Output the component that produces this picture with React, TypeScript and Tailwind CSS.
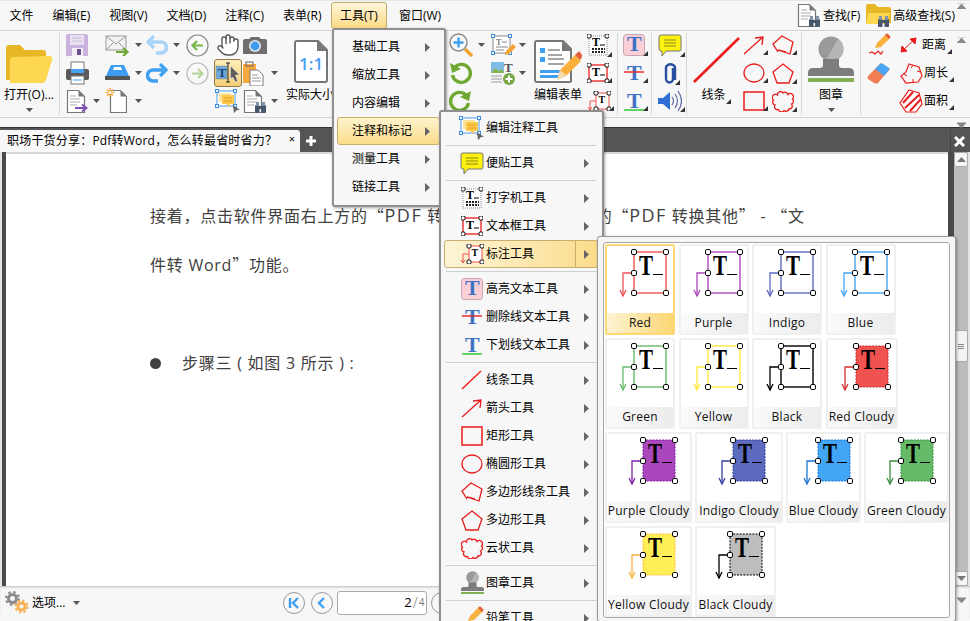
import type { ReactNode } from "react";
import { Hand } from "lucide-react";

const S = ({ w, h, children }: { w: number; h: number; children: ReactNode }) => (
  <svg width={w} height={h} viewBox={`0 0 ${w} ${h}`} className="block shrink-0" fill="none">
    {children}
  </svg>
);

const Caret = () => (
  <svg width="7" height="4" viewBox="0 0 7 4" className="block shrink-0">
    <path d="M0 0h7L3.5 4z" fill="#555" />
  </svg>
);

const Corner = () => (
  <svg width="5" height="5" viewBox="0 0 5 5" className="absolute bottom-0 right-0">
    <path d="M5 0v5H0z" fill="#333" />
  </svg>
);

const SubArrow = () => (
  <svg width="5" height="9" viewBox="0 0 5 9" className="block shrink-0">
    <path d="M0 0l5 4.5L0 9z" fill="#666" />
  </svg>
);

const Handle = ({ x, y }: { x: number; y: number }) => (
  <rect x={x - 2} y={y - 2} width="4" height="4" rx="1.2" fill="#fff" stroke="#000" />
);

const BigHandle = ({ x, y }: { x: number; y: number }) => (
  <rect x={x - 2.5} y={y - 2.5} width="5" height="5" rx="1.4" fill="#fff" stroke="#000" />
);

/* ---- document-ish icons ---- */
const DocBase = () => (
  <>
    <path d="M1.5 1.5h11l6 6v16h-17z" fill="#fff" stroke="#777" strokeWidth="1.2" />
    <path d="M12.5 1.5l6 6h-6z" fill="#777" />
    <path d="M4 7h6M4 10h10M4 13h10M4 16h7" stroke="#aaa" />
  </>
);
const DocArrow = () => (
  <S w={22} h={25}>
    <DocBase />
    <path d="M9 19h11M16 15.5l4.5 3.5-4.5 3.5" stroke="#7a52b3" strokeWidth="2" />
  </S>
);
const DocNew = () => (
  <S w={22} h={26}>
    <path d="M5.5 2.5h10l6 6v16h-16z" fill="#fff" stroke="#777" strokeWidth="1.2" />
    <path d="M15.5 2.5l6 6h-6z" fill="#777" />
    <path d="M5 0v9M0.5 4.5h9M2 1.5l6 6M8 1.5l-6 6" stroke="#f4a024" strokeWidth="1.2" />
    <circle cx="5" cy="4.5" r="1.6" fill="#fff" />
  </S>
);
const Bino = ({ x, y }: { x: number; y: number }) => (
  <g transform={`translate(${x} ${y})`}>
    <rect x="0" y="3" width="4.5" height="8" rx="1" fill="#46566b" />
    <rect x="6.5" y="3" width="4.5" height="8" rx="1" fill="#46566b" />
    <rect x="1" y="0" width="3" height="4" fill="#8094aa" />
    <rect x="7" y="0" width="3" height="4" fill="#8094aa" />
    <rect x="4" y="4" width="3" height="3" fill="#46566b" />
  </g>
);
const DocBino = () => (
  <S w={25} h={25}>
    <DocBase />
    <Bino x={12} y={13} />
  </S>
);

/* ---- ribbon, first half ---- */
const Folder = () => (
  <S w={47} h={38}>
    <path d="M0 3q0-3 3-3h11l5 5h18q3 0 3 3v27H0z" fill="#e8b726" />
    <path d="M4 15q0-3 3-3l36-1q4 0 3 4l-6 20q-1 3-4 3H4z" fill="#fdd652" />
  </S>
);
const Save = () => (
  <S w={22} h={22}>
    <path d="M0 2q0-2 2-2h18q2 0 2 2v20H0z" fill="#c9b3de" />
    <rect x="4" y="1" width="14" height="10" fill="#e9e1f2" />
    <path d="M6 4h10M6 7h10" stroke="#cbbcd9" />
    <rect x="6" y="14" width="11" height="8" fill="#f4f0f8" />
    <rect x="11" y="15" width="4" height="6" fill="#6d4f8c" />
  </S>
);
const Printer = () => (
  <S w={23} h={24}>
    <rect x="5" y="1" width="13" height="8" fill="#fff" stroke="#777" />
    <rect x="0" y="8" width="23" height="11" rx="2" fill="#5a5a5a" />
    <rect x="5" y="8" width="13" height="4" fill="#4aa3f2" />
    <rect x="5" y="15" width="13" height="8" fill="#fff" stroke="#777" />
    <path d="M7 19h9" stroke="#4aa3f2" />
  </S>
);
const Mail = () => (
  <S w={25} h={21}>
    <rect x="1" y="1" width="20" height="14" fill="#f2f2f2" stroke="#999" />
    <path d="M1 1l10 8 10-8M1 15l7-7M21 15l-7-7" stroke="#999" />
    <path d="M11 17h11M18 13l4.5 4-4.5 4" stroke="#6ea832" strokeWidth="2.2" />
  </S>
);
const Scan = () => (
  <S w={25} h={18}>
    <path d="M6 1h13l5 11H1z" fill="#3e9cf0" />
    <path d="M9 3h7l1 3H8z" fill="#fff" />
    <rect x="0" y="12" width="25" height="4" fill="#555" />
  </S>
);
const Undo = ({ color, flip }: { color: string; flip?: boolean }) => (
  <S w={22} h={20}>
    <g transform={flip ? "translate(22 0) scale(-1 1)" : undefined}>
      <path d="M5 7h10a5 5 0 0 1 0 11h-5" stroke={color} strokeWidth="3.6" />
      <path d="M8 1L2 7l6 6" stroke={color} strokeWidth="3.2" />
    </g>
  </S>
);
const CircleArrow = ({ ring, color, right }: { ring: string; color: string; right?: boolean }) => (
  <S w={23} h={23}>
    <circle cx="11.5" cy="11.5" r="10.5" fill="#f8f8f8" stroke={ring} strokeWidth="1.2" />
    <path d={right ? "M6 11.5h10M12 7l4.5 4.5L12 16" : "M17 11.5H7M11 7l-4.5 4.5L11 16"} stroke={color} strokeWidth="2.2" />
  </S>
);
const Camera = () => (
  <S w={24} h={18}>
    <path d="M0 5q0-2 2-2h4l2-2h8l2 2h4q2 0 2 2v13H0z" fill="#6e6e6e" />
    <circle cx="12" cy="10" r="6" fill="#e8e8e8" />
    <circle cx="12" cy="10" r="4.4" fill="#3f9bee" />
  </S>
);
const SelectText = () => (
  <div className="flex h-[28px] w-[28px] items-center justify-center rounded-[3px] border border-[#8d7b4b] bg-linear-to-b from-[#fdeeb9] to-[#f5cf78]">
    <S w={26} h={24}>
      <rect x="1" y="5" width="11" height="13" fill="#6ea9dd" stroke="#8b8b6b" strokeWidth=".5" />
      <text x="2.8" y="16" fontFamily="'Liberation Serif',serif" fontWeight="700" fontSize="13" fill="#20456e">T</text>
      <path d="M11 2h4M13 2v19M11 21h4" stroke="#222" />
      <path d="M15.5 5l9 9h-4l2 6-2 1-3-5-2 2z" fill="#5b5b5b" stroke="#eee" strokeWidth=".5" />
    </S>
  </div>
);
const SelectNotes = ({ w = 26 }: { w?: number }) => (
  <S w={w} h={24}>
    <rect x="2" y="2" width="18" height="15" fill="#fff" stroke="#4a9be8" />
    <rect x="4" y="4" width="12" height="9" fill="#fde29a" />
    <rect x="7" y="6" width="12" height="9" fill="#fcc94f" />
    <path d="M9 9h8M9 12h8" stroke="#e59e1d" />
    <path d="M11 15l4 3v-3z" fill="#fcc94f" />
    <rect x="0.5" y="0.5" width="3" height="3" fill="#fff" stroke="#3a8fe0" />
    <rect x="18.5" y="0.5" width="3" height="3" fill="#fff" stroke="#3a8fe0" />
    <rect x="0.5" y="15.5" width="3" height="3" fill="#fff" stroke="#3a8fe0" />
    <rect x="18.5" y="15.5" width="3" height="3" fill="#fff" stroke="#3a8fe0" />
    <path d="M18 16l7 5h-3l-3 3z" fill="#666" />
  </S>
);
const Clipboard = () => (
  <S w={21} h={25}>
    <rect x="0" y="3" width="13" height="19" fill="#f8a93e" />
    <rect x="3" y="1" width="7" height="4" fill="none" stroke="#666" />
    <path d="M7 9h8l5 5v11H7z" fill="#fff" stroke="#777" />
    <path d="M9 14h6M9 17h9M9 20h9" stroke="#999" />
  </S>
);
const OneOne = () => (
  <S w={35} h={43}>
    <path d="M2 3q0-2 2-2h21l9 9v30q0 2-2 2H4q-2 0-2-2z" fill="#fff" stroke="#777" strokeWidth="2" />
    <path d="M24 1l10 10H24z" fill="#777" />
    <text x="6" y="30" fontFamily="'Open Sans',sans-serif" fontWeight="600" fontSize="17" fill="#4aa0ee">1:1</text>
  </S>
);

/* ---- ribbon, second half ---- */
const ZoomIn = () => (
  <S w={24} h={24}>
    <circle cx="9.5" cy="9.5" r="8.5" fill="#f7f7f7" stroke="#888" strokeWidth="1.4" />
    <path d="M4.5 9.5h10M9.5 4.5v10" stroke="#3f9ff0" strokeWidth="2.4" />
    <path d="M16 16l7 7" stroke="#f3a531" strokeWidth="3.4" />
  </S>
);
const Rotate = ({ cw }: { cw?: boolean }) => (
  <S w={23} h={24}>
    <g transform={cw ? "translate(23 0) scale(-1 1)" : undefined}>
      <path d="M6 6a9 9 0 1 1-2.5 8" stroke="#6fa832" strokeWidth="3.4" />
      <path d="M1 2l2 10 9-4z" fill="#6fa832" />
    </g>
  </S>
);
const TextEdit = () => (
  <S w={25} h={23}>
    <rect x="2" y="2" width="17" height="17" fill="#fff" stroke="#888" />
    <text x="5" y="11" fontFamily="'Liberation Serif',serif" fontSize="9" fill="#444">T</text>
    <path d="M11 8h5M5 13h12M5 16h8" stroke="#888" />
    {[[2, 2], [19, 2], [2, 19], [19, 19]].map(([x, y]) => (
      <rect key={`${x}-${y}`} x={x - 1.5} y={y - 1.5} width="3" height="3" fill="#fff" stroke="#3a8fe0" />
    ))}
    <path d="M14 21l1-4 7-7 3 3-7 7z" fill="#f3a531" />
  </S>
);
const ImageT = () => (
  <S w={25} h={24}>
    <rect x="0" y="1" width="13" height="11" fill="#7fbce8" />
    <path d="M0 12l4-5 4 3 3-2 2 4z" fill="#8ab44e" />
    <text x="13" y="11" fontFamily="'Liberation Serif',serif" fontWeight="700" fontSize="13" fill="#555">T</text>
    <path d="M0 15h11M0 18h11M0 21h11" stroke="#999" />
    <circle cx="18" cy="18" r="6" fill="#78a845" />
    <path d="M14.5 18h7M18 14.5v7" stroke="#fff" strokeWidth="2" />
  </S>
);
const FormEdit = () => (
  <S w={48} h={43}>
    <path d="M1 3q0-2 2-2h26l8 8v32q0 1-2 1H3q-2 0-2-2z" fill="#fff" stroke="#777" strokeWidth="2" />
    <path d="M28 1l10 10H28z" fill="#777" />
    <g fill="#3f9ff0">
      <rect x="6" y="8" width="5" height="5" />
      <rect x="6" y="17" width="5" height="5" />
      <rect x="6" y="30" width="22" height="3" />
      <rect x="6" y="35" width="22" height="3" />
    </g>
    <path d="M14 10h12M14 15h14M14 19h16M14 24h16" stroke="#888" strokeWidth="1.4" />
    <path d="M23 40l3-10 15-15 6 6-15 15z" fill="#fbb03b" />
    <path d="M23 40l3-10 7 6z" fill="#f6dcb4" />
    <path d="M41 15l3-3q1-1 2 0l2 3q1 1 0 2l-2 3z" fill="#e2603c" />
  </S>
);
const Typewriter = () => (
  <S w={22} h={23}>
    <rect x="2" y="2" width="18" height="19" fill="#fff" stroke="#888" strokeDasharray="1 1" />
    <Handle x={2} y={2} />
    <Handle x={20} y={2} />
    <text x="5" y="12" fontFamily="'Liberation Serif',serif" fontWeight="700" fontSize="12" fill="#000">T</text>
    <path d="M13 11h5" stroke="#000" />
    <path d="M5 15h13M5 18h13" stroke="#222" strokeWidth="2" strokeDasharray="2 1" />
  </S>
);
const TextBoxIcon = () => (
  <S w={22} h={20}>
    <rect x="2" y="2" width="18" height="16" fill="#fff" stroke="#ef1c1c" strokeWidth="1.3" />
    <Handle x={2} y={2} />
    <Handle x={20} y={2} />
    <Handle x={2} y={18} />
    <Handle x={20} y={18} />
    <text x="5" y="13" fontFamily="'Liberation Serif',serif" fontWeight="700" fontSize="12" fill="#000">T</text>
    <path d="M13 12h5" stroke="#000" />
  </S>
);
const CalloutIconSmall = () => (
  <S w={24} h={20}>
    <rect x="9" y="2" width="13" height="16" fill="#fff" stroke="#ef5350" />
    <Handle x={9} y={2} />
    <Handle x={22} y={2} />
    <Handle x={9} y={18} />
    <Handle x={22} y={18} />
    <text x="11.5" y="12" fontFamily="'Liberation Serif',serif" fontWeight="700" fontSize="10" fill="#000">T</text>
    <path d="M9 10H3v9M1 16l2 3 2-3" stroke="#ef5350" />
  </S>
);
const BigT = ({ x = 6 }: { x?: number }) => (
  <text x={x} y="17" fontFamily="'Liberation Serif',serif" fontWeight="700" fontSize="22" fill="#3f72c4">T</text>
);
const HighlightT = () => (
  <S w={22} h={22}>
    <rect x="0.5" y="0.5" width="21" height="21" rx="3" fill="#fbcfd8" stroke="#c9a5ae" />
    <BigT x={4} />
  </S>
);
const StrikeT = () => (
  <S w={22} h={20}>
    <BigT x={4} />
    <path d="M1 9h20" stroke="#e62020" strokeWidth="1.4" />
  </S>
);
const UnderT = () => (
  <S w={22} h={20}>
    <BigT x={4} />
    <path d="M1 19h20" stroke="#22c522" strokeWidth="1.4" />
  </S>
);
const Note = () => (
  <S w={24} h={23}>
    <path d="M3 1h18q2 0 2 2v12q0 2-2 2H8l-4 5v-5H3q-2 0-2-2V3q0-2 2-2z" fill="#fdf20e" stroke="#777" />
    <path d="M6 6h12M6 9h12M6 12h12" stroke="#8a8420" />
  </S>
);
const Clip = () => (
  <S w={14} h={24}>
    <path d="M10 7v11a3.5 3.5 0 0 1-7 0V6a5 5 0 0 1 9 0v13" stroke="#2a4fa0" strokeWidth="2.4" />
  </S>
);
const Speaker = () => (
  <S w={24} h={22}>
    <path d="M0 8h5l7-6v18l-7-6H0z" fill="#2f6fd6" />
    <path d="M14 7q3 4 0 8M17 4q5 7 0 14M20 1q7 10 0 20" stroke="#5a6aa8" strokeWidth="1.2" />
  </S>
);
const LineBig = () => (
  <S w={47} h={46}>
    <path d="M1 45L46 1" stroke="#ea1c1c" strokeWidth="2.6" />
  </S>
);
const ArrowIcon = () => (
  <S w={22} h={20}>
    <path d="M1 19L20 2M12 3l8-1-1 8" stroke="#ea1c1c" strokeWidth="1.3" />
  </S>
);
const RectIcon = () => (
  <S w={22} h={20}>
    <rect x="1" y="1" width="20" height="18" stroke="#ea1c1c" strokeWidth="1.5" />
  </S>
);
const EllipseIcon = () => (
  <S w={22} h={20}>
    <ellipse cx="11" cy="10" rx="10" ry="9" stroke="#ea1c1c" strokeWidth="1.3" />
  </S>
);
const PolyLine = () => (
  <S w={22} h={20}>
    <path d="M6 17L1 9 10 1l11 6-3 12-12-4 8 2" stroke="#ea1c1c" strokeWidth="1.3" />
  </S>
);
const Poly = () => (
  <S w={22} h={21}>
    <path d="M11 1l10 8-4 11H5L1 9z" stroke="#ea1c1c" strokeWidth="1.3" />
  </S>
);
const Cloud = () => (
  <S w={22} h={21}>
    <path
      d="M11 2A3 3 0 0 1 16 3.5A3 3 0 0 1 20.5 8A3 3 0 0 1 19.5 13A3 3 0 0 1 17 18A3 3 0 0 1 12 19.5A3 3 0 0 1 6.5 18.5A3 3 0 0 1 3 14A3 3 0 0 1 1.5 9A3 3 0 0 1 5.5 4A3 3 0 0 1 11 2Z"
      stroke="#ea1c1c"
      strokeWidth="1.3"
    />
  </S>
);
const Stamp = ({ scale = 1 }: { scale?: number }) => (
  <svg width={46 * scale} height={47 * scale} viewBox="0 0 46 47" className="block shrink-0">
    <circle cx="23" cy="13" r="12.5" fill="#9a9a9a" />
    <path d="M30 3a12 12 0 0 1 1 19L18 24z" fill="#b5b5b5" />
    <path d="M15 23h16v6q0 3 3 3h7q5 0 5 5v3H0v-3q0-5 5-5h7q3 0 3-3z" fill="#7d7d7d" />
    <rect x="0" y="42" width="46" height="4" fill="#86b153" />
  </svg>
);
const PencilWave = () => (
  <S w={24} h={24}>
    <path d="M2 20l3-1 3 2 3-3 3 3 2-3" stroke="#ea1c1c" strokeWidth="1.2" />
    <path d="M8 15l2-5 9-9 4 4-9 9z" fill="#f9b13d" />
    <path d="M19 1q1-1 2 0l2 2q1 1 0 2l-1 1-4-4z" fill="#e2603c" />
  </S>
);
const Eraser = () => (
  <S w={24} h={24}>
    <path d="M1 15L14 2l9 6-12 14q-2 1-4 0l-6-4q-1-1 0-3z" fill="#f47e53" />
    <path d="M13 3q1-1 3 0l6 4q1 1 0 2l-5 6-9-7z" fill="#4aa6f2" />
  </S>
);
const Measure = () => (
  <S w={19} h={18}>
    <path d="M2 16L17 2M2 16l1-6 5 5zM17 2l-1 6-5-5z" stroke="#ea1c1c" fill="#ea1c1c" strokeWidth="1" />
  </S>
);
const Perimeter = () => (
  <S w={24} h={22}>
    <path d="M10 2l10 3 3 9-4 6-12 1-5-7 5-4z" stroke="#ea1c1c" strokeWidth="1.2" />
    <path d="M14 3l-2 3M21 10l-3-1M14 20v-3M5 12l3 2" stroke="#ea1c1c" />
  </S>
);
const Area = () => (
  <S w={24} h={24}>
    <path d="M10 1l10 3 3 11-6 8H7l-6-9z" fill="#fff" stroke="#ea1c1c" strokeWidth="1.2" />
    <path d="M4 14L14 3M6 19L20 6M11 22l11-12" stroke="#ea1c1c" strokeWidth="2" />
  </S>
);
const FolderBino = () => (
  <S w={25} h={23}>
    <path d="M0 2q0-2 2-2h7l3 3h11q2 0 2 2v14H0z" fill="#e8b726" />
    <path d="M2 9h22l-3 11H0z" fill="#fdd652" />
    <Bino x={12} y={12} />
  </S>
);
const ArrowLine = () => (
  <S w={22} h={20}>
    <path d="M1 19L20 1" stroke="#ea1c1c" strokeWidth="1.4" />
  </S>
);

/* ---- layout helpers ---- */
const Sep = () => <div className="mt-[2px] h-[82px] w-px shrink-0 bg-[#d8d8d8]" />;

const Col = ({ className, children }: { className: string; children: ReactNode }) => (
  <div className={`flex shrink-0 flex-col ${className}`}>{children}</div>
);
const Rw = ({ children, gap = "gap-[5px]" }: { children: ReactNode; gap?: string }) => (
  <div className={`flex h-[28px] items-center ${gap}`}>{children}</div>
);
const Marked = ({ children }: { children: ReactNode }) => (
  <div className="relative pr-[3px]">
    {children}
    <Corner />
  </div>
);

const Big = ({ className, icon, label, caret }: { className: string; icon: ReactNode; label: ReactNode; caret?: boolean }) => (
  <div className={`flex shrink-0 flex-col items-center ${className}`}>
    <div className="flex h-[52px] items-end">{icon}</div>
    <div className="mt-[3px] flex h-[18px] items-center whitespace-nowrap">{label}</div>
    {caret && <div className="mt-[4px]"><Caret /></div>}
  </div>
);

const callouts: Record<string, string> = {
  Red: "#ef5350",
  Purple: "#ab47bc",
  Indigo: "#5c6bc0",
  Blue: "#42a5f5",
  Green: "#66bb6a",
  Yellow: "#ffeb3b",
  Black: "#000000",
};

const CalloutArt = ({ color, arrow, dash }: { color: string; arrow: string; dash?: string }) => (
  <svg width="66" height="66" viewBox="0 0 66 66" className="block">
    {dash ? (
      <rect x="27" y="6" width="32" height="41" fill={color} stroke={dash} strokeDasharray="2 1.2" />
    ) : (
      <rect x="27" y="6" width="32" height="41" fill="#fff" stroke={color} strokeWidth="1.4" />
    )}
    <path d="M27 27H16v23" stroke={arrow} strokeWidth="1.3" fill="none" />
    <path d="M13 44l3 6 3-6" stroke={arrow} strokeWidth="1.3" fill="none" />
    <text x="32" y="29" fontFamily="'Liberation Serif',serif" fontWeight="700" fontSize="29" textLength="14" lengthAdjust="spacingAndGlyphs" fill="#000">T</text>
    <path d="M46 28.5h10" stroke="#000" />
    <BigHandle x={27} y={6} />
    <BigHandle x={59} y={6} />
    <BigHandle x={27} y={27} />
    <BigHandle x={27} y={47} />
    <BigHandle x={59} y={47} />
  </svg>
);

const GalleryItem = ({ label, className, selected, art }: { label: string; className: string; selected?: boolean; art: ReactNode }) => (
  <div className={`shrink-0 rounded-[2px] border-2 ${selected ? "border-[#fdd873]" : "border-[#f0f0f0]"} ${className}`}>
    <div className="flex h-[67px] justify-center bg-white">{art}</div>
    <div
      className={`flex h-[20px] items-center justify-center whitespace-nowrap text-[12px] tracking-[0.25px] text-[#111] ${
        selected ? "bg-linear-to-r from-[#fdf3d2] to-[#fcd672]" : "bg-linear-to-r from-[#fafafa] to-[#ececec]"
      }`}
    >
      {label}
    </div>
  </div>
);

const plain = (k: string) => <CalloutArt color={callouts[k]} arrow={callouts[k]} />;

const firstMenu = ["基础工具", "缩放工具", "内容编辑", "注释和标记", "测量工具", "链接工具"];

type SubItem = { label?: string; icon?: ReactNode; active?: boolean; noArrow?: boolean };
const subMenu: SubItem[] = [
  { label: "编辑注释工具", icon: <SelectNotes />, noArrow: true },
  {},
  { label: "便贴工具", icon: <Note /> },
  {},
  { label: "打字机工具", icon: <Typewriter /> },
  { label: "文本框工具", icon: <TextBoxIcon /> },
  { label: "标注工具", icon: <CalloutIconSmall />, active: true },
  {},
  { label: "高亮文本工具", icon: <HighlightT /> },
  { label: "删除线文本工具", icon: <StrikeT /> },
  { label: "下划线文本工具", icon: <UnderT /> },
  {},
  { label: "线条工具", icon: <ArrowLine /> },
  { label: "箭头工具", icon: <ArrowIcon /> },
  { label: "矩形工具", icon: <RectIcon /> },
  { label: "椭圆形工具", icon: <EllipseIcon /> },
  { label: "多边形线条工具", icon: <PolyLine /> },
  { label: "多边形工具", icon: <Poly /> },
  { label: "云状工具", icon: <Cloud /> },
  {},
  { label: "图章工具", icon: <Stamp scale={0.5} /> },
  {},
  { label: "铅笔工具", icon: <PencilWave /> },
];

const NavCircle = ({ d }: { d: string }) => (
  <svg width="22" height="22" viewBox="0 0 22 22" className="block shrink-0">
    <circle cx="11" cy="11" r="10.5" fill="#f8f8f8" stroke="#999" />
    <path d={d} stroke="#3f9ff0" strokeWidth="2.4" fill="none" />
  </svg>
);

const Gears = () => (
  <S w={24} h={23}>
    <circle cx="7.5" cy="7.5" r="4" stroke="#8a8a8a" strokeWidth="3" />
    <circle cx="7.5" cy="7.5" r="6.5" stroke="#8a8a8a" strokeWidth="2" strokeDasharray="2.5 2.6" />
    <circle cx="16.5" cy="15.5" r="3.6" stroke="#f7b154" strokeWidth="3" />
    <circle cx="16.5" cy="15.5" r="6" stroke="#f7b154" strokeWidth="2" strokeDasharray="2.4 2.3" />
  </S>
);

function Collapse({ up }: { up?: boolean }) {
  return (
    <svg width="9" height="6" viewBox="0 0 9 6" className="block">
      <path d={up ? "M0 6l4.5-5L9 6zM0 0h9" : "M0 1l4.5 5L9 1zM0 0h9"} fill="#888" stroke="#888" strokeWidth=".6" />
    </svg>
  );
}

// full-width quotes come from the CJK font, the Latin one draws them too narrow
const Q = ({ children }: { children: string }) => (
  <span className="font-['Noto_Sans_CJK_SC',sans-serif] leading-none">{children}</span>
);
const Pdf = () => <span className="text-[18px] leading-none tracking-[1.5px]">PDF</span>;

export default function App() {
  return (
    <div className="relative h-[621px] w-[970px] overflow-hidden bg-[#f7f7f7] font-['Open_Sans','Noto_Sans_CJK_SC',sans-serif] text-[12px] text-black">
      {/* menu bar */}
      <div className="flex h-[30px] items-center border-t border-[#e6e6e6] leading-none">
        {["文件", "编辑(E)", "视图(V)", "文档(D)", "注释(C)", "表单(R)"].map((m) => (
          <span key={m} className="whitespace-nowrap px-[9.5px]">{m}</span>
        ))}
        <span className="flex h-[27px] w-[56px] items-center justify-center whitespace-nowrap rounded-[3px] border border-[#c3a96a] bg-linear-to-b from-[#fff6d8] to-[#fbd984]">工具(T)</span>
        <span className="ml-[12px] whitespace-nowrap">窗口(W)</span>
        <div className="ml-auto flex items-center pr-[15px]">
          <DocBino />
          <span className="ml-[1px] whitespace-nowrap">查找(F)</span>
          <span className="ml-[6px]"><FolderBino /></span>
          <span className="ml-[2px] whitespace-nowrap">高级查找(S)</span>
        </div>
      </div>

      {/* ribbon */}
      <div className="border-t border-[#d4d4d4]">
        <div className="flex h-[86px] pl-[4px]">
          <Big className="w-[50px]" icon={<Folder />} label="打开(O)..." caret />
          <div className="ml-[5px]"><Sep /></div>
          <Col className="ml-[6px] w-[39px]">
            <Rw><Save /></Rw>
            <Rw><Printer /></Rw>
            <Rw><DocArrow /><Caret /></Rw>
          </Col>
          <Col className="w-[41px]">
            <Rw><Mail /><Caret /></Rw>
            <Rw><Scan /><Caret /></Rw>
            <Rw><DocNew /><span className="ml-[3px]"><Caret /></span></Rw>
          </Col>
          <Col className="w-[40px]">
            <Rw><Undo color="#a9d4f7" /><Caret /></Rw>
            <Rw><Undo color="#3f9ff0" flip /><Caret /></Rw>
          </Col>
          <Col className="w-[27px]">
            <Rw><CircleArrow ring="#888" color="#7ab648" /></Rw>
            <Rw><CircleArrow ring="#bbb" color="#b8d69c" right /></Rw>
          </Col>
          <Col className="w-[30px] items-center">
            <Rw><Hand size={24} strokeWidth={1.4} color="#555" fill="#fff" /></Rw>
            <Rw><SelectText /></Rw>
            <Rw><SelectNotes /></Rw>
          </Col>
          <Col className="w-[42px]">
            <Rw><Camera /></Rw>
            <Rw gap="gap-[7px]"><Clipboard /><Caret /></Rw>
            <Rw gap="gap-[3px]"><DocBino /><Caret /></Rw>
          </Col>
          <Big className="w-[50px]" icon={<OneOne />} label="实际大小" />
          <div className="w-[114px] shrink-0" />
          <Col className="w-[42px]">
            <Rw><ZoomIn /><Caret /></Rw>
            <Rw><Rotate /></Rw>
            <Rw><Rotate cw /></Rw>
          </Col>
          <Col className="w-[42px]">
            <Rw gap="gap-[3px]"><TextEdit /><Caret /></Rw>
            <Rw gap="gap-[3px]"><ImageT /><Caret /></Rw>
          </Col>
          <Big className="w-[50px]" icon={<FormEdit />} label="编辑表单" />
          <Col className="ml-[4px] w-[30px]">
            <Rw><Marked><Typewriter /></Marked></Rw>
            <Rw><Marked><TextBoxIcon /></Marked></Rw>
            <Rw><Marked><CalloutIconSmall /></Marked></Rw>
          </Col>
          <Sep />
          <Col className="ml-[5px] w-[28px]">
            <Rw><Marked><HighlightT /></Marked></Rw>
            <Rw><Marked><StrikeT /></Marked></Rw>
            <Rw><Marked><UnderT /></Marked></Rw>
          </Col>
          <Sep />
          <Col className="ml-[5px] w-[29px] items-center">
            <Rw><Marked><Note /></Marked></Rw>
            <Rw><Marked><Clip /></Marked></Rw>
            <Rw><Marked><Speaker /></Marked></Rw>
          </Col>
          <Sep />
          <Big
            className="ml-[5px] w-[48px]"
            icon={<LineBig />}
            label={<span className="relative pr-[5px]">线条<Corner /></span>}
          />
          <Col className="ml-[3px] w-[29px]">
            <Rw><Marked><ArrowIcon /></Marked></Rw>
            <Rw><Marked><EllipseIcon /></Marked></Rw>
            <Rw><Marked><RectIcon /></Marked></Rw>
          </Col>
          <Col className="w-[29px]">
            <Rw><Marked><PolyLine /></Marked></Rw>
            <Rw><Marked><Poly /></Marked></Rw>
            <Rw><Marked><Cloud /></Marked></Rw>
          </Col>
          <Sep />
          <Big className="ml-[6px] w-[46px]" icon={<Stamp />} label="图章" caret />
          <div className="ml-[6px]"><Sep /></div>
          <Col className="ml-[6px] w-[32px]">
            <Rw><PencilWave /></Rw>
            <Rw><Eraser /></Rw>
          </Col>
          <Col className="w-[60px]">
            <Rw gap="gap-[4px]"><Measure /><span className="relative whitespace-nowrap pr-[6px]">距离<Corner /></span></Rw>
            <Rw gap="gap-[1px]"><Perimeter /><span className="relative whitespace-nowrap pr-[6px]">周长<Corner /></span></Rw>
            <Rw gap="gap-[1px]"><Area /><span className="relative whitespace-nowrap pr-[6px]">面积<Corner /></span></Rw>
          </Col>
        </div>
      </div>

      {/* collapse strip */}
      <div className="h-[10px] border-t border-[#d4d4d4]" />

      {/* tab bar */}
      <div className="flex h-[25px] border-t border-[#333] bg-[#555]">
        <div className="mt-[2px] flex h-[22px] w-[300px] shrink-0 items-center rounded-tr-[3px] bg-[#f8f8f8] pl-[7px] pr-[5px]">
          <span className="whitespace-nowrap tracking-[0.2px]">职场干货分享：Pdf转Word，怎么转最省时省力？</span>
          <span className="-mt-[6px] ml-auto text-[11px] leading-none">×</span>
        </div>
        <div className="ml-[3px] mt-[2px] flex h-[22px] w-[16px] items-center justify-center">
          <svg width="10" height="10" viewBox="0 0 10 10"><path d="M5 0v10M0 5h10" stroke="#fff" strokeWidth="3" /></svg>
        </div>
        <div className="ml-auto mr-[2px] mt-[2px] flex h-[22px] w-[18px] items-center justify-center border-l border-[#444]">
          <svg width="11" height="11" viewBox="0 0 11 11"><path d="M1 1l9 9M10 1l-9 9" stroke="#fff" strokeWidth="3" /></svg>
        </div>
      </div>

      {/* document area */}
      <div className="flex h-[434px]">
        <div className="w-[2px] bg-[#e4e4e4]" />
        <div className="w-[4px] bg-[#4a4a4a]" />
        <div className="w-[942px] overflow-hidden border-t-2 border-[#d8d8d8] bg-white pl-[144px] pt-[38px] text-[16px] leading-[49px] tracking-[0.75px] text-[#404040]">
          <div className="whitespace-nowrap">
            接着，点击软件界面右上方的<Q>“</Q><Pdf /> 转换<Q>”</Q>，再选择菜单<span className="mr-[9px]">中</span>的<Q>“</Q><Pdf /> 转换其他<Q>”</Q> - <Q>“</Q>文
          </div>
          <div className="whitespace-nowrap">件转 Word<Q>”</Q>功能。</div>
          <div className="mt-[49px] flex items-center whitespace-nowrap">
            <span className="h-[11px] w-[11px] rounded-full bg-[#404040]" />
            <span className="ml-[21px]">步骤三 ( 如图 3 所示 ) :</span>
          </div>
        </div>
        <div className="w-[6px] bg-[#4a4a4a]" />
        <div className="flex w-[14px] flex-col bg-[#bcbcbc]">
          <div className="flex h-[15px] items-center justify-center rounded-[2px] border border-[#aaa] bg-[#f6f6f6]">
            <svg width="9" height="5" viewBox="0 0 9 5"><path d="M0 5l4.5-5L9 5z" fill="#777" /></svg>
          </div>
          <div className="mt-[163px] flex h-[32px] flex-col items-center justify-center gap-[1px] rounded-[2px] border border-[#aaa] bg-[#f4f4f4]">
            <span className="h-px w-[6px] bg-[#888]" />
            <span className="h-px w-[6px] bg-[#888]" />
            <span className="h-px w-[6px] bg-[#888]" />
          </div>
          <div className="mt-auto flex h-[15px] items-center justify-center rounded-[2px] border border-[#aaa] bg-[#f6f6f6]">
            <svg width="9" height="5" viewBox="0 0 9 5"><path d="M0 0l4.5 5L9 0z" fill="#777" /></svg>
          </div>
        </div>
        <div className="w-[2px] bg-[#e4e4e4]" />
      </div>

      {/* status bar */}
      <div className="flex h-[32px] items-center border-t border-[#ccc] pl-[5px] pr-[4px] shadow-[inset_0_1px_2px_#ddd]">
        <Gears />
        <span className="ml-[3px] whitespace-nowrap">选项...</span>
        <span className="ml-[8px]"><Caret /></span>
        <div className="ml-[203px] flex items-center">
          <NavCircle d="M7 6v10M15 6l-5 5 5 5" />
          <div className="ml-[6px]"><NavCircle d="M13 6l-5 5 5 5" /></div>
          <div className="ml-[4px] flex h-[24px] w-[90px] items-center justify-end rounded-[3px] border border-[#aaa] bg-white pr-[2px]">
            <span className="text-[13px]">2</span>
            <span className="mx-[1px] text-[15px] font-light text-[#777]">/</span>
            <span className="text-[10px] text-[#777]">4</span>
          </div>
          <div className="ml-[4px]"><NavCircle d="M9 6l5 5-5 5" /></div>
        </div>
        <div className="-mt-[6px] ml-auto"><Collapse /></div>
      </div>

      {/* first-level tool menu */}
      <div className="absolute left-[332px] top-[28px] h-[179px] w-[114px] rounded-[3px] border-2 border-[#8f8f8f] bg-[#f7f7f7] pl-[3px] pt-[3px] shadow-[1px_1px_3px_rgba(0,0,0,.35)]">
        {firstMenu.map((m, i) => (
          <div
            key={m}
            className={`flex h-[28px] w-[103px] items-center rounded-[3px] border pl-[14px] pr-[9px] ${
              i === 3 ? "border-[#c9ae6e] bg-linear-to-b from-[#fff3cd] to-[#fbdc8a]" : "border-transparent"
            }`}
          >
            <span className="whitespace-nowrap">{m}</span>
            <span className="ml-auto"><SubArrow /></span>
          </div>
        ))}
      </div>

      {/* second-level annotation menu */}
      <div className="absolute left-[439px] top-[110px] h-[530px] w-[165px] rounded-[3px] border-2 border-[#8f8f8f] bg-[#f7f7f7] pl-[3px] pt-[2px] shadow-[1px_1px_3px_rgba(0,0,0,.35)]">
        {subMenu.map((it, i) =>
          it.label ? (
            <div
              key={it.label}
              className={`flex h-[28px] w-[154px] items-center rounded-[3px] border ${
                it.active ? "border-[#c9ae6e] bg-linear-to-r from-[#fdf4d6] to-[#fbdc8a]" : "border-transparent"
              }`}
            >
              <div className="flex w-[41px] shrink-0 justify-center pl-[13px]">{it.icon}</div>
              <span className="whitespace-nowrap">{it.label}</span>
              {it.active && <span className="ml-auto h-full w-px bg-[#c9ae6e]" />}
              {!it.noArrow && <span className={it.active ? "ml-[8px] mr-[8px]" : "ml-auto mr-[8px]"}><SubArrow /></span>}
            </div>
          ) : (
            <div key={`sep-${i}`} className="flex h-[7px] items-center">
              <div className="ml-[2px] h-px w-[150px] bg-[#cfcfcf]" />
            </div>
          ),
        )}
      </div>

      {/* callout style gallery */}
      <div className="absolute left-[597px] top-[236px] h-[386px] w-[359px] rounded-[3px] border border-[#999] bg-[#f6f6f6] p-[5px] shadow-[1px_1px_3px_rgba(0,0,0,.35)]">
        <div className="flex h-[376px] flex-col gap-[3px] rounded-[3px] border border-[#a8a8a8] bg-white pl-[1px] pt-[1px] text-[#111]">
          <div className="flex gap-[3.5px]">
            <GalleryItem label="Red" className="w-[70px]" selected art={plain("Red")} />
            <GalleryItem label="Purple" className="w-[70px]" art={plain("Purple")} />
            <GalleryItem label="Indigo" className="w-[70px]" art={plain("Indigo")} />
            <GalleryItem label="Blue" className="w-[70px]" art={plain("Blue")} />
          </div>
          <div className="flex gap-[3.5px]">
            <GalleryItem label="Green" className="w-[70px]" art={plain("Green")} />
            <GalleryItem label="Yellow" className="w-[70px]" art={plain("Yellow")} />
            <GalleryItem label="Black" className="w-[70px]" art={plain("Black")} />
            <GalleryItem label="Red Cloudy" className="w-[72px]" art={<CalloutArt color="#ef5350" arrow="#d32f2f" dash="#c62828" />} />
          </div>
          <div className="flex gap-[3px]">
            <GalleryItem label="Purple Cloudy" className="w-[87px]" art={<CalloutArt color="#ab47bc" arrow="#7b1fa2" dash="#7b1fa2" />} />
            <GalleryItem label="Indigo Cloudy" className="w-[88px]" art={<CalloutArt color="#5c6bc0" arrow="#303f9f" dash="#303f9f" />} />
            <GalleryItem label="Blue Cloudy" className="w-[75px]" art={<CalloutArt color="#42a5f5" arrow="#1976d2" dash="#1976d2" />} />
            <GalleryItem label="Green Cloudy" className="w-[85px]" art={<CalloutArt color="#66bb6a" arrow="#388e3c" dash="#388e3c" />} />
          </div>
          <div className="flex gap-[3px]">
            <GalleryItem label="Yellow Cloudy" className="w-[87px]" art={<CalloutArt color="#ffee58" arrow="#f9b33a" dash="#fbc02d" />} />
            <GalleryItem label="Black Cloudy" className="w-[81px]" art={<CalloutArt color="#bdbdbd" arrow="#000" dash="#000" />} />
          </div>
        </div>
      </div>

      {/* ribbon collapse arrows */}
      <div className="absolute right-[2px] top-[3px] flex h-[125px] w-[14px] flex-col items-center text-[#888]">
        <Collapse up />
        <div className="mt-[28px]"><Collapse up /></div>
        <div className="mt-auto"><Collapse /></div>
      </div>
    </div>
  );
}
